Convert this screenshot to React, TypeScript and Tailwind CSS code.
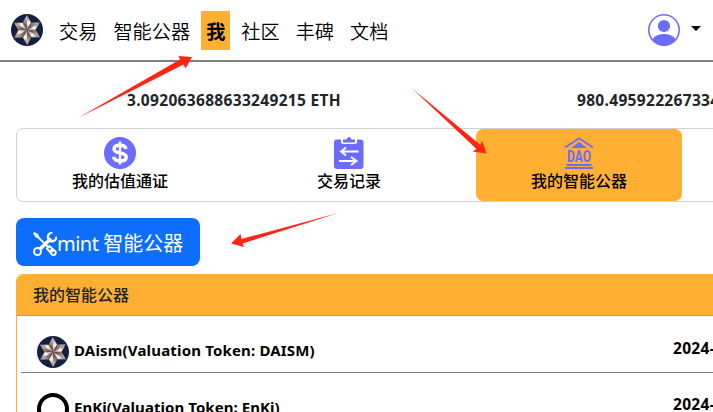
import React from "react";

function StarLogo({ id }: { id: string }) {
  return (
    <svg viewBox="-16 -16 32 32" className="h-8 w-8 shrink-0">
      <defs>
        <linearGradient id={id + "a"} gradientUnits="userSpaceOnUse" x1="-4" y1="-5" x2="0" y2="-13">
          <stop offset="0" stopColor="#6d5650" />
          <stop offset="1" stopColor="#d9c8c0" />
        </linearGradient>
        <linearGradient id={id + "b"} gradientUnits="userSpaceOnUse" x1="0" y1="-14" x2="2" y2="0">
          <stop offset="0" stopColor="#8a736b" />
          <stop offset="0.500" stopColor="#fff6f0" />
          <stop offset="1" stopColor="#9a837a" />
        </linearGradient>
      </defs>
      <circle r="16" fill="#142042" />
      {[0, 60, 120, 180, 240, 300].map((a) => (
        <g key={a} transform={`rotate(${a})`}>
          <path d="M0 -15 L-4.3 -7.6 L0 0Z" fill={`url(#${id}a)`} />
          <path d="M0 -15 L4 -7.6 L0 0Z" fill={`url(#${id}b)`} />
        </g>
      ))}
    </svg>
  );
}

function UserIcon() {
  return (
    <svg viewBox="0 0 32 32" className="h-8 w-8">
      <defs>
        <clipPath id="face"><circle cx="16" cy="16" r="15.5" /></clipPath>
      </defs>
      <circle cx="16" cy="16" r="15.2" fill="#fff" stroke="#6c6cff" strokeWidth="1.6" />
      <circle cx="16" cy="12" r="6.1" fill="#6c6cff" />
      <ellipse cx="16" cy="28" rx="12" ry="8" fill="#6c6cff" clipPath="url(#face)" />
    </svg>
  );
}

function DollarIcon() {
  return (
    <svg viewBox="0 0 32 32" className="h-8 w-8">
      <circle cx="16" cy="16" r="16" fill="#6c6cff" />
      <path d="M22 12C21.500 9.400 19.200 8.200 16 8.200c-3.500 0-5.900 1.200-5.900 3.700 0 5.500 12.100 2.600 12.100 8 0 2.700-2.500 4-6.100 4-3.600 0-6.100-1.300-6.500-4.100" fill="none" stroke="#fff" strokeWidth="3.500" />
      <path d="M16 4.500v23" stroke="#fff" strokeWidth="2.400" />
    </svg>
  );
}

function RecordIcon() {
  return (
    <svg viewBox="0 0 32 32" className="h-8 w-8">
      <path d="M4 2.500h4V5q0 2 2 2h12q2 0 2-2V2.500h3.500q3 0 3 3V29q0 3-3 3H4q-3 0-3-3V5.500q0-3 3-3Z" fill="#6c6cff" />
      <path d="M10 2.500h3.500Q14 0 16 0t2.500 2.500H22V5.500H10Z" fill="#6c6cff" />
      <path d="M25.500 14.500H8M13 10.500l-5 4 5 4M6 24h17.500M18 20l5.500 4-5.500 4" fill="none" stroke="#fff" strokeWidth="1.900" />
    </svg>
  );
}

function DaoIcon() {
  return (
    <svg viewBox="0 0 32 32" className="h-8 w-8" fill="#6c6cff">
      <path d="M2 10.500 16 1.300l14 9.200" fill="none" stroke="#6c6cff" strokeWidth="1.900" />
      <path d="M8 11 16 5l8 6ZM3.500 27h25v1.900h-25ZM2 30h28v2H2Z" />
      <text x="4" y="25" textLength="24" lengthAdjust="spacingAndGlyphs" fontFamily="Roboto" fontWeight="700" fontSize="17">DAO</text>
    </svg>
  );
}

function ToolsIcon() {
  return (
    <svg viewBox="0 0 24 24" className="h-6 w-6 shrink-0" fill="none" stroke="#fff">
      <path d="M6.500 17.500 18 6.500" strokeWidth="3.600" />
      <circle cx="4.500" cy="19.500" r="3.500" strokeWidth="2" />
      <path d="M19.500.8A4.300 4.300 0 1 0 23.300 4.500" strokeWidth="2.200" />
      <path d="M3 3 15 15" strokeWidth="1.800" />
      <path d="M0 1.300 1.300 0 5.500 2.500 6 6 2.700 5.600Z" fill="#fff" stroke="none" />
      <path d="m14 16.500 2.500-2.500 6 5.500q.8 1.800-.5 3t-2.800.2ZM17.500 17.500l2.500 2.500" strokeWidth="1.900" />
    </svg>
  );
}

function Arrow({ d, id, x1, y1, x2, y2 }: { d: string; id: string; x1: number; y1: number; x2: number; y2: number }) {
  return (
    <>
      <linearGradient id={id} gradientUnits="userSpaceOnUse" x1={x1} y1={y1} x2={x2} y2={y2}>
        <stop offset="0" stopColor="#ff2414" stopOpacity="0.7" />
        <stop offset="0.150" stopColor="#ff2414" />
      </linearGradient>
      <path d={d} fill={`url(#${id})`} />
    </>
  );
}

const nav = [
  { label: "交易", cls: "ml-[16px]" },
  { label: "智能公器", cls: "ml-[16px]" },
  { label: "我", cls: "ml-[11px] bg-[#ffaf32] px-[5px] font-bold" },
  { label: "社区", cls: "ml-[11px]" },
  { label: "丰碑", cls: "ml-[16px]" },
  { label: "文档", cls: "ml-[16px]" },
];

const tabs = [
  { label: "我的估值通证", icon: <DollarIcon />, cls: "w-[206px]" },
  { label: "交易记录", icon: <RecordIcon />, cls: "ml-[23px] w-[206px]" },
  { label: "我的智能公器", icon: <DaoIcon />, cls: "ml-[24px] w-[206px] rounded-[7px] bg-[#ffaf32]" },
];

export default function App() {
  return (
    <div className="relative h-[412px] w-[713px] overflow-hidden bg-white font-['Noto_Sans','Noto_Sans_CJK_SC',sans-serif] text-black">
      <header className="flex h-[62px] items-center border-b-2 border-[#808080] pl-[11px]">
        <StarLogo id="top" />
        <nav className="flex items-center font-['Noto_Sans_CJK_SC',sans-serif] text-[19.2px] font-[350]">
          {nav.map((n) => (
            <a key={n.label} className={"h-[39px] leading-[40px] whitespace-nowrap " + n.cls}>{n.label}</a>
          ))}
        </nav>
        <div className="mr-[12px] ml-auto flex items-center">
          <UserIcon />
          <span className="mb-[3px] ml-[11px] border-x-[5px] border-t-[5px] border-x-transparent border-t-black" />
        </div>
      </header>

      <div className="flex h-[66px] pt-[26px] pl-[127px] text-[15.5px] leading-6 font-bold tracking-[0.32px] text-[#212529]">
        <span className="w-[450px] shrink-0 whitespace-nowrap">3.092063688633249215 ETH</span>
        <span className="whitespace-nowrap">980.495922267334</span>
      </div>

      <div className="ml-[16px] flex h-[74px] w-[920px] rounded-[7px] border border-[#d0d0d0]">
        {tabs.map((t) => (
          <div key={t.label} className={"flex shrink-0 flex-col items-center pt-[8px] " + t.cls}>
            {t.icon}
            <span className="-mt-px font-['Noto_Sans_CJK_SC',sans-serif] text-[16px] leading-6 font-medium">{t.label}</span>
          </div>
        ))}
      </div>

      <button className="mt-[16px] ml-[16px] flex h-12 w-[184px] items-center rounded-[8px] bg-[#0d6efd] pt-[3px] pl-[17px] text-[20px] whitespace-nowrap text-white">
        <ToolsIcon />
        <span><span className="tracking-[-0.5px]">mint </span>智能公器</span>
      </button>

      <section className="mt-[8px] ml-[16px] h-[300px] w-[920px] rounded-[7px] border border-[#ffaf32]">
        <h2 className="h-[41px] rounded-t-[6px] border-b border-[#d6942d] bg-[#ffaf32] pl-4 font-['Noto_Sans_CJK_SC',sans-serif] text-[16px] leading-[39px] font-medium text-[#212529]">我的智能公器</h2>
        <div className="ml-[4px] text-[15px] font-bold">
          <div className="flex h-[57px] items-center border-b border-[#808080] pt-[15px] pl-[16px]">
            <StarLogo id="row" />
            <span className="mb-[3px] ml-[5px] w-[599px] shrink-0 tracking-[0.17px]">DAism(Valuation Token: DAISM)</span>
            <span className="mb-[6px] text-[15.5px] whitespace-nowrap tracking-[0.3px]">2024-06-12</span>
          </div>
          <div className="flex h-[57px] items-center pt-[15px] pl-[16px]">
            <span className="h-8 w-8 shrink-0 rounded-full border-4 border-black" />
            <span className="mb-[4px] ml-[5px] w-[599px] shrink-0 tracking-[0.06px]">EnKi(Valuation Token: EnKi)</span>
            <span className="mb-[8px] text-[15.5px] whitespace-nowrap tracking-[0.3px]">2024-06-12</span>
          </div>
        </div>
      </section>

      <svg className="pointer-events-none absolute inset-0" width="713" height="412">
        <Arrow id="ar1" x1={78} y1={118} x2={192} y2={57} d="M77 118.500 180 59.500 178.500 56 192 57 185.500 68.500 183.500 64.500Z" />
        <Arrow id="ar2" x1={412} y1={89} x2={486} y2={153} d="M411 87.500 480.500 145 482 140.500 486.500 153.500 472.500 151.500 476.500 149Z" />
        <Arrow id="ar3" x1={339} y1={213} x2={231} y2={244} d="M340 212.500 241.500 239 240.500 234 231 243.500 244 247 242.500 243.500Z" />
      </svg>
    </div>
  );
}
